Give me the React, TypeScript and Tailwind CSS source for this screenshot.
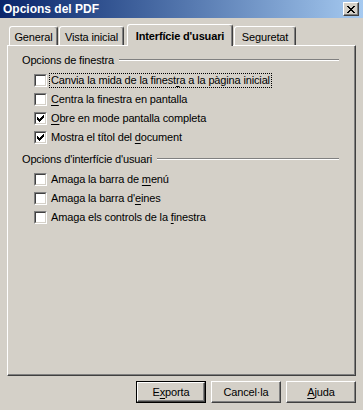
import React from "react";

const CHECK = [
  "......X",
  ".....XX",
  "X...XXX",
  "XX.XXX.",
  "XXXXX..",
  ".XXX...",
  "..X....",
];

function CheckMark() {
  const rects: React.ReactNode[] = [];
  CHECK.forEach((row, y) =>
    row.split("").forEach((c, x) => {
      if (c === "X") rects.push(<rect key={`${x}-${y}`} x={x} y={y} width={1} height={1} fill="#000" />);
    })
  );
  return (
    <svg width="7" height="7" viewBox="0 0 7 7" shapeRendering="crispEdges">
      {rects}
    </svg>
  );
}

function Checkbox({ checked }: { checked?: boolean }) {
  return (
    <div className="w-[13px] h-[13px] shrink-0 border-t border-l border-[#808080] border-r border-b border-r-white border-b-white">
      <div className="w-full h-full bg-white border-t border-l border-[#404040] border-r border-b border-r-[#d4d0c8] border-b-[#d4d0c8] flex items-center justify-center">
        {checked && <CheckMark />}
      </div>
    </div>
  );
}

function Row({ children, checked, focus }: { children: React.ReactNode; checked?: boolean; focus?: boolean }) {
  return (
    <div className="flex items-center h-[19px] pl-[26px]">
      <Checkbox checked={checked} />
      <span
        className={`ml-[2px] px-[1px] leading-[13px] border border-dotted ${focus ? "border-black" : "border-transparent"}`}
      >
        {children}
      </span>
    </div>
  );
}

function GroupLabel({ children }: { children: React.ReactNode }) {
  return (
    <div className="flex items-center h-[14px] pl-[14px] pr-[16px]">
      <span className="whitespace-nowrap">{children}</span>
      <div className="flex-1 ml-[5px] h-[2px] border-t border-[#808080] border-b border-b-white" />
    </div>
  );
}

function U({ children }: { children: React.ReactNode }) {
  return <span className="underline underline-offset-[2px]">{children}</span>;
}

function Tab({ children, w, selected, ml }: { children: React.ReactNode; w: string; selected?: boolean; ml: string }) {
  return (
    <div
      className={`${w} ${ml} ${
        selected ? "h-[22px] mb-[-1px] font-bold" : "h-[19px]"
      } bg-[#d4d0c8] rounded-t-[3px] border-t border-l border-white border-r border-r-[#404040] shadow-[inset_-1px_0_0_#808080] flex items-start justify-center ${
        selected ? "pt-[3px]" : "pt-[2px]"
      } whitespace-nowrap`}
    >
      {children}
    </div>
  );
}

function Button({ children, def }: { children: React.ReactNode; def?: boolean }) {
  if (def) {
    return (
      <div className="w-[70px] h-[22px] border border-black">
        <div className="w-full h-full border-t border-l border-white border-r border-b border-r-[#404040] border-b-[#404040] shadow-[inset_-1px_-1px_0_#808080] flex items-center justify-center">
          {children}
        </div>
      </div>
    );
  }
  return (
    <div className="w-[70px] h-[22px] border-t border-l border-white border-r border-b border-r-[#404040] border-b-[#404040] shadow-[inset_-1px_-1px_0_#808080] flex items-center justify-center">
      {children}
    </div>
  );
}

export default function App() {
  return (
    <div
      className="w-[363px] h-[410px] bg-[#d4d0c8] flex flex-col overflow-hidden text-[11px] tracking-[-0.15px] text-black"
      style={{ fontFamily: '"Liberation Sans", Arial, sans-serif' }}
    >
      <div className="h-[18px] flex items-center bg-gradient-to-r from-[#0a246a] to-[#a6caf0] pl-[3px] pr-[4px]">
        <span className="text-white font-bold text-[12px] tracking-normal leading-none">Opcions del PDF</span>
        <div className="ml-auto w-[16px] h-[14px] bg-[#d4d0c8] border-t border-l border-white border-r border-b border-r-[#404040] border-b-[#404040] shadow-[inset_-1px_-1px_0_#808080] flex items-center justify-center">
          <svg width="8" height="7" viewBox="0 0 8 7" shapeRendering="crispEdges">
            <path d="M0 0h2v1h-2zM6 0h2v1h-2zM1 1h2v1h-2zM5 1h2v1h-2zM2 2h4v1h-4zM3 3h2v1h-2zM2 4h4v1h-4zM1 5h2v1h-2zM5 5h2v1h-2zM0 6h2v1h-2zM6 6h2v1h-2z" fill="#000" />
          </svg>
        </div>
      </div>

      <div className="h-[27px] flex items-end pl-[9px] relative z-10">
        <Tab w="w-[49px]" ml="ml-0">General</Tab>
        <Tab w="w-[65px]" ml="ml-[1px]">Vista inicial</Tab>
        <Tab w="w-[106px]" ml="ml-[3px]" selected>
          Interfície d'usuari
        </Tab>
        <Tab w="w-[62px]" ml="ml-[1px]">Seguretat</Tab>
      </div>

      <div className="ml-[7px] w-[349px] h-[331px] shrink-0 border-t border-l border-white border-r border-b border-r-[#404040] border-b-[#404040] shadow-[inset_-1px_-1px_0_#808080] pt-[7px]">
        <GroupLabel>Opcions de finestra</GroupLabel>
        <div className="mt-[4px]">
          <Row focus>
            Canvia la mida de la finest<U>r</U>a a la pàgina inicial
          </Row>
          <Row>
            <U>C</U>entra la finestra en pantalla
          </Row>
          <Row checked>
            <U>O</U>bre en mode pantalla completa
          </Row>
          <Row checked>
            Mostra el títol del <U>d</U>ocument
          </Row>
        </div>
        <div className="mt-[5px]">
          <GroupLabel>Opcions d'interfície d'usuari</GroupLabel>
        </div>
        <div className="mt-[4px]">
          <Row>
            Amaga la barra de <U>m</U>enú
          </Row>
          <Row>
            Amaga la barra d'<U>e</U>ines
          </Row>
          <Row>
            Amaga els controls de la <U>f</U>inestra
          </Row>
        </div>
      </div>

      <div className="mt-[5px] flex justify-end gap-[5px] pr-[7px]">
        <Button def>
          <span>
            E<U>x</U>porta
          </span>
        </Button>
        <Button>Cancel·la</Button>
        <Button>
          <span>
            <U>A</U>juda
          </span>
        </Button>
      </div>
    </div>
  );
}
